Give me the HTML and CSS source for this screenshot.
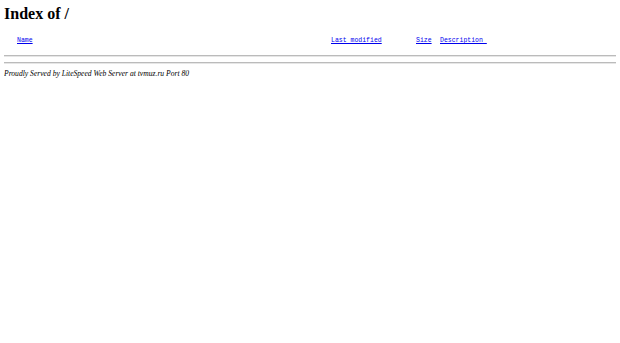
FILE: index.html
```
<!DOCTYPE html>
<html lang="en">
<head>
  <meta charset="UTF-8">
  <title>Index of /</title>
  <link rel="stylesheet" href="styles.css">
</head>
<body>
  <h1>Index of /</h1>
  <div class="listing">
    <div class="head">
      <span class="ico"></span>
      <a class="col-name" href="?C=N;O=D">Name</a>
      <a class="col-date" href="?C=M;O=A">Last modified</a>
      <a class="col-size" href="?C=S;O=A">Size</a>
      <a class="col-desc" href="?C=D;O=A">Description </a>
    </div>
    <hr>
  </div>
  <hr>
  <address>Proudly Served by LiteSpeed Web Server at tvmuz.ru Port 80</address>
</body>
</html>
```

FILE: styles.css
```
body {
  margin: 4px;
  background: #fff;
  color: #000;
  font-family: "Liberation Serif", serif;
}
h1 {
  font-size: 16px;
  margin: 0;
  line-height: 20px;
}
a {
  color: #0000ee;
}
.listing {
  font-family: "Liberation Mono", monospace;
  font-size: 6.5px;
  margin-top: 13px;
}
.head {
  display: flex;
  align-items: baseline;
  white-space: pre;
}
.ico {
  width: 13px;
}
.col-name {
  width: 314px;
}
.col-date {
  width: 85px;
}
.col-size {
  width: 24px;
}
hr {
  margin: 5px 0;
  border: 0;
  border-top: 1px solid #bbb;
  border-bottom: 1px solid #e6e6e6;
  height: 0;
}
.listing hr {
  margin-top: 11px;
}
address {
  font-size: 7.6px;
  margin-top: 1px;
}
```
